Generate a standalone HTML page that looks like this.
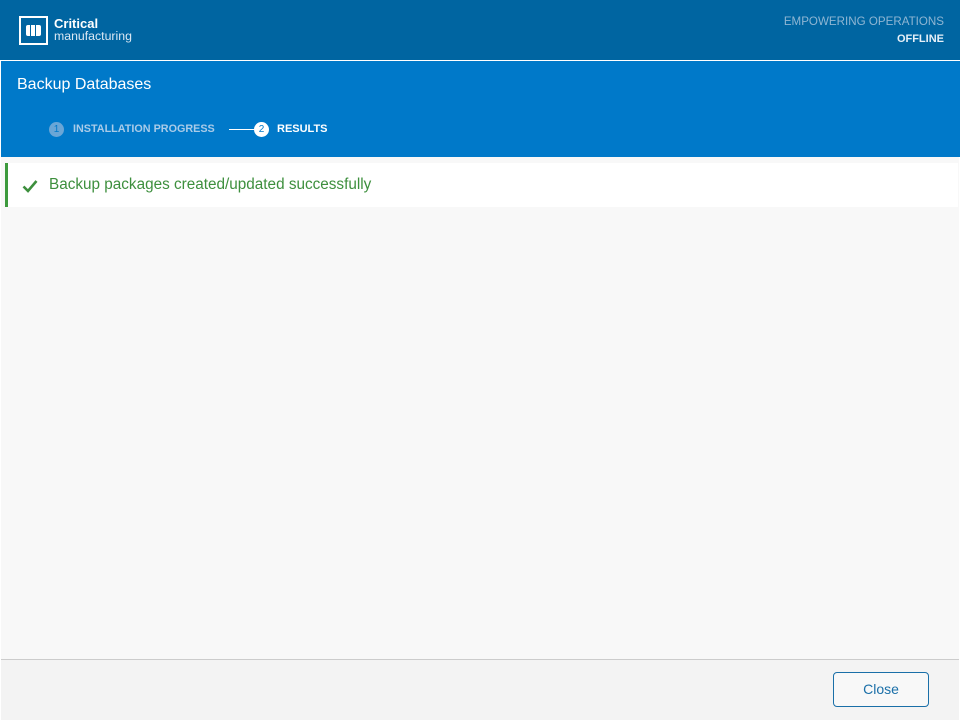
<!DOCTYPE html>
<html><head><style>
body{margin:0;width:960px;height:720px;overflow:hidden;background:#fff;font-family:"Liberation Sans",sans-serif;position:relative}
.hdr{position:absolute;left:0;top:0;width:960px;height:60px;background:#0065a1}
.panel{position:absolute;left:1px;top:61px;width:959px;height:96px;background:#0079c9}
.content{position:absolute;left:1px;top:157px;width:958px;height:502px;background:#f8f8f8}
.msg{position:absolute;left:5px;top:163px;width:953px;height:44px;background:#fff;border-left:3px solid #3d9a3d;box-sizing:border-box}
.footer{position:absolute;left:1px;top:659px;width:958px;height:60px;background:#f3f3f3;border-top:1px solid #ccc}
.btn{position:absolute;left:833px;top:672px;width:96px;height:35px;border:1px solid #1a6fa8;border-radius:4px;box-sizing:border-box;color:#1a6fa8;font-size:14px;text-align:center;line-height:33px;background:#f8f8f8}
</style></head><body>
<div class="hdr">
 <div style="position:absolute;left:19px;top:16px;width:29px;height:29px;border:2px solid #fff;box-sizing:border-box"></div>
 <div style="position:absolute;left:26px;top:25px;width:4px;height:11px;background:#fff;border-radius:2px 0 0 2px"></div>
 <div style="position:absolute;left:31px;top:25px;width:4px;height:11px;background:#fff"></div>
 <div style="position:absolute;left:36px;top:25px;width:5px;height:11px;background:#fff;border-radius:0 2px 2px 0"></div>
 <div style="position:absolute;left:54px;top:16px;color:#fff;font-weight:bold;font-size:13px">Critical</div>
 <div style="position:absolute;left:54px;top:29px;color:#dbe8f3;font-size:12.3px">manufacturing</div>
 <div style="position:absolute;right:16px;top:15px;color:#8fb6d3;font-size:11.6px">EMPOWERING OPERATIONS</div>
 <div style="position:absolute;right:16px;top:33px;color:#e6f0f8;font-size:11px;font-weight:bold">OFFLINE</div>
</div>
<div class="panel">
 <div style="position:absolute;left:16px;top:15px;color:#fff;font-size:16px">Backup Databases</div>
 <div style="position:absolute;left:48px;top:61px;width:15px;height:15px;border-radius:50%;background:#6aa6d6;color:#0079c9;font-size:10px;text-align:center;line-height:15px">1</div>
 <div style="position:absolute;left:72px;top:62px;color:#a9cbe8;font-size:10.8px;font-weight:bold">INSTALLATION PROGRESS</div>
 <div style="position:absolute;left:228px;top:68px;width:26px;height:1px;background:#fff"></div>
 <div style="position:absolute;left:253px;top:61px;width:15px;height:15px;border-radius:50%;background:#fff;color:#0079c9;font-size:10px;text-align:center;line-height:15px">2</div>
 <div style="position:absolute;left:276px;top:62px;color:#fff;font-size:11px;font-weight:bold">RESULTS</div>
</div>
<div class="content"></div>
<div class="msg">
 <svg style="position:absolute;left:14px;top:16px" width="16" height="14" viewBox="0 0 16 14"><path d="M1.5 7.5 L6 12 L14.5 2" stroke="#3d8f3d" stroke-width="2.6" fill="none"/></svg>
 <div style="position:absolute;left:41px;top:13px;color:#3d8f3d;font-size:15.3px">Backup packages created/updated successfully</div>
</div>
<div class="footer"></div>
<div class="btn">Close</div>
</body></html>
